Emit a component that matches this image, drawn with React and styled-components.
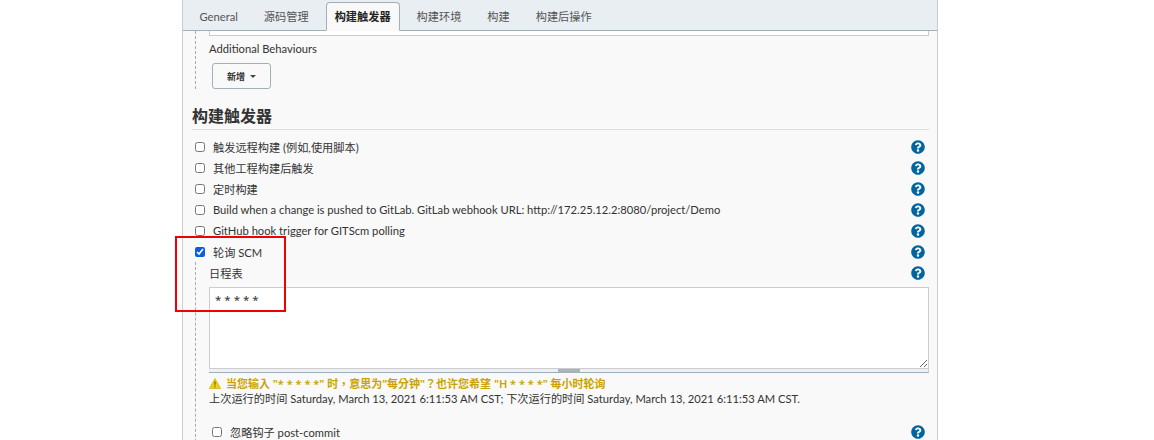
import styled, { createGlobalStyle } from "styled-components";
import { FaQuestionCircle } from "react-icons/fa";

const GlobalStyle = createGlobalStyle`
  html, body { margin: 0; padding: 0; background: #fff; }
  body {
    font-family: "Lato", "Noto Sans CJK SC", sans-serif;
    font-size: 11.2px;
    color: #333;
  }
`;

const Page = styled.div`
  position: relative;
  width: 1154px;
  height: 440px;
  overflow: hidden;
`;

const Panel = styled.div`
  box-sizing: border-box;
  width: 756px;
  height: 440px;
  margin-left: 182px;
  border-left: 1px solid #ccc;
  border-right: 1px solid #ccc;
  background: #f9f9f9;
`;

const TabBar = styled.div`
  box-sizing: border-box;
  display: flex;
  align-items: flex-end;
  gap: 8px;
  height: 31px;
  margin-right: -1px;
  padding-left: 7.5px;
  background: #e9eef2;
  border-right: 1px solid #c3cbd0;
  border-bottom: 1px solid #9fb0bb;
`;

const Tab = styled.div`
  box-sizing: border-box;
  height: 29px;
  margin-bottom: -1px;
  padding: 0 8px;
  line-height: 27px;
  white-space: nowrap;
  color: ${(p) => (p.$active ? "#222" : "#555")};
  font-weight: ${(p) => (p.$active ? 700 : 400)};
  background: ${(p) => (p.$active ? "#f9f9f9" : "transparent")};
  border: 1px solid ${(p) => (p.$active ? "#9fb0bb" : "transparent")};
  border-bottom-color: ${(p) => (p.$active ? "#f9f9f9" : "transparent")};
  border-radius: 4px 4px 0 0;
`;

const Content = styled.div`
  padding-right: 8px;
`;

const Nested = styled.div`
  box-sizing: border-box;
  margin-left: 12px;
  padding-left: 13px;
  border-left: 1px dashed #aaa;
`;

const CutOffBox = styled.div`
  box-sizing: border-box;
  height: 5px;
  background: #fff;
  border: 1px solid #ccc;
  border-top: 0;
`;

const Label = styled.div`
  height: 27px;
  line-height: 25px;
`;

const AddButton = styled.button`
  box-sizing: border-box;
  display: flex;
  align-items: center;
  justify-content: center;
  gap: 5px;
  width: 59px;
  height: 26px;
  margin-left: 3px;
  padding: 0;
  font: inherit;
  font-size: 9px;
  font-weight: 600;
  color: #333;
  background: #f9f9f9;
  border: 1px solid #9fb0bb;
  border-radius: 3px;
`;

const Caret = styled.span`
  width: 0;
  height: 0;
  border-left: 3px solid transparent;
  border-right: 3px solid transparent;
  border-top: 3px solid #444;
`;

const SectionTitle = styled.h2`
  box-sizing: border-box;
  height: 30px;
  margin: 11px 0 6px 9px;
  padding: 5px 0 0;
  font-size: 16px;
  line-height: 22px;
  font-weight: 700;
  color: #333;
  border-bottom: 1px solid #ddd;
`;

const Row = styled.div`
  display: flex;
  align-items: center;
  height: 21px;
  padding-left: ${(p) => p.$indent || 0}px;
`;

const Check = styled.input.attrs({ type: "checkbox" })`
  flex: none;
  width: 10px;
  height: 10px;
  margin: 0 8px 0 0;
  accent-color: #0b5fd9;
`;

const RowText = styled.span`
  flex: 1;
  white-space: nowrap;
`;

const Help = styled(FaQuestionCircle)`
  flex: none;
  width: 14px;
  height: 14px;
  margin-right: 4px;
  color: #00659e;
`;

const ScheduleInput = styled.textarea`
  display: block;
  box-sizing: border-box;
  width: 100%;
  height: 82px;
  margin-top: 4px;
  padding: 4px 5px;
  font-family: "Noto Sans", sans-serif;
  font-size: 11.5px;
  color: #333;
  background: #fff;
  border: 1px solid #ccc;
  outline: 0;
  resize: vertical;
`;

const DragStrip = styled.div`
  box-sizing: border-box;
  display: flex;
  justify-content: center;
  height: 4px;
  background: #f0f0f0;
  border-bottom: 1px solid #9fb0bb;
  border-right: 1px solid #ccc;
`;

const DragHandle = styled.span`
  width: 22px;
  height: 3px;
  background: #aab4bb;
`;

const Warning = styled.div`
  display: flex;
  align-items: center;
  gap: 5px;
  height: 16px;
  margin-top: 2px;
  font-family: "Noto Sans", "Noto Sans CJK TC", sans-serif;
  font-size: 11px;
  font-weight: 600;
  color: #c9a400;
  white-space: nowrap;
`;

const RunInfo = styled.div`
  height: 16px;
  line-height: 16px;
  white-space: nowrap;
  margin-bottom: 14px;
`;

const Highlight = styled.div`
  position: absolute;
  left: 175px;
  top: 236px;
  box-sizing: border-box;
  width: 111px;
  height: 76px;
  border: 2px solid #f00000;
`;

const tabs = ["General", "源码管理", "构建触发器", "构建环境", "构建", "构建后操作"];

const triggers = [
  { text: "触发远程构建 (例如,使用脚本)" },
  { text: "其他工程构建后触发" },
  { text: "定时构建" },
  { text: "Build when a change is pushed to GitLab. GitLab webhook URL: http://172.25.12.2:8080/project/Demo" },
  { text: "GitHub hook trigger for GITScm polling" },
  { text: "轮询 SCM", checked: true },
];

function WarningIcon() {
  return (
    <svg width="12" height="11" viewBox="0 0 12 11">
      <path d="M6 .5 11.7 10.5H.3Z" fill="#f5d000" stroke="#c9a400" strokeWidth=".6" />
      <path d="M5.5 3.6h1l-.2 4h-.6ZM5.5 8.3h1v1h-1Z" fill="#333" />
    </svg>
  );
}

export default function App() {
  return (
    <Page>
      <GlobalStyle />
      <Panel>
        <TabBar>
          {tabs.map((t, i) => (
            <Tab key={t} $active={i === 2}>{t}</Tab>
          ))}
        </TabBar>
        <Content>
          <Nested>
            <CutOffBox />
            <Label>Additional Behaviours</Label>
            <AddButton>新增 <Caret /></AddButton>
          </Nested>
          <SectionTitle>构建触发器</SectionTitle>
          {triggers.map((t) => (
            <Row key={t.text} $indent={12}>
              <Check defaultChecked={t.checked} />
              <RowText>{t.text}</RowText>
              <Help />
            </Row>
          ))}
          <Nested>
            <Row>
              <RowText>日程表</RowText>
              <Help />
            </Row>
            <ScheduleInput defaultValue="* * * * *" />
            <DragStrip><DragHandle /></DragStrip>
            <Warning>
              <WarningIcon />
              当您输入 "* * * * *" 时，意思为"每分钟"？也许您希望 "H * * * *" 每小时轮询
            </Warning>
            <RunInfo>
              上次运行的时间 Saturday, March 13, 2021 6:11:53 AM CST; 下次运行的时间 Saturday, March 13, 2021 6:11:53 AM CST.
            </RunInfo>
            <Row $indent={3}>
              <Check defaultChecked={false} />
              <RowText>忽略钩子 post-commit</RowText>
              <Help />
            </Row>
          </Nested>
        </Content>
      </Panel>
      <Highlight />
    </Page>
  );
}
